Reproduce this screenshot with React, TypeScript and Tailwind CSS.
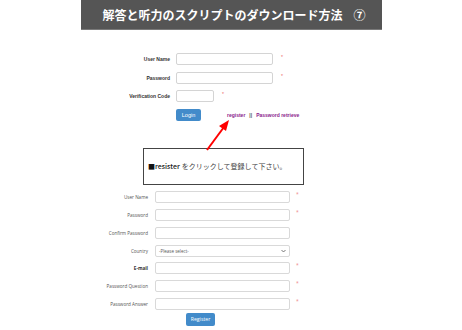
import React from "react";

const TopRow = ({ label, w, star = true }: { label: string; w: number; star?: boolean }) => (
  <div className="flex h-[12px]">
    <span className="w-[170px] text-right text-[5px] font-bold leading-[12px] text-[#333]">{label}</span>
    <div className="ml-[6px] h-[12px] rounded-[2px] border border-[#d4d4d4] bg-white" style={{ width: w }} />
    {star && <span className="ml-[8px] text-[5px] leading-[8px] text-[#e66]">*</span>}
  </div>
);

const BottomRow = ({ label, star = true, bold = false, mt = "mt-[6px]" }: { label: string; star?: boolean; bold?: boolean; mt?: string }) => (
  <div className={`flex h-[12px] ${mt}`}>
    <span className={`w-[148px] text-right text-[4.6px] leading-[12px] ${bold ? "font-bold text-[#333]" : "text-[#555]"}`}>{label}</span>
    <div className="ml-[7px] h-[12px] w-[135px] rounded-[2px] border border-[#d9d9d9] bg-white" />
    {star && <span className="ml-[6px] text-[5px] leading-[6px] text-[#e88]">*</span>}
  </div>
);

export default function App() {
  return (
    <div className="relative h-[330px] w-[462px] overflow-hidden bg-white" style={{ fontFamily: '"Liberation Sans", Arial, sans-serif' }}>
      <div
        className="mx-auto flex h-[30px] w-[301px] items-center border-b border-[#7a7a7a] bg-[#555555] pl-[22px] text-[12px] font-bold text-white"
        style={{ fontFamily: '"Noto Sans CJK JP", "Noto Sans", sans-serif' }}
      >
        <span>解答と听力のスクリプトのダウンロード方法</span>
        <span className="ml-[11px]">⑦</span>
      </div>

      <div className="mt-[23px] flex flex-col">
        <TopRow label="User Name" w={97} />
        <div className="mt-[7px]">
          <TopRow label="Password" w={97} />
        </div>
        <div className="mt-[6px]">
          <TopRow label="Verification Code" w={38} />
        </div>
        <div className="mt-[7px] flex h-[12px] items-center pl-[176px]">
          <div className="flex h-[12px] w-[25px] items-center justify-center rounded-[2px] bg-[#428bca] text-[5.5px] text-white">Login</div>
          <div className="ml-[26px] mt-[2px] flex items-center text-[5px] font-bold text-[#8b1a8b]">
            <span>register</span>
            <span className="mx-[4px] text-[#555]">||</span>
            <span>Password retrieve</span>
          </div>
        </div>
      </div>

      <div
        className="ml-[143px] mt-[27px] flex h-[37px] w-[161px] items-center border border-[#444] pl-[4px] text-[7px] text-[#444]"
        style={{ fontFamily: '"Noto Sans CJK JP", "Noto Sans", sans-serif' }}
      >
        <span className="text-[#111]">■</span>
        <span className="font-medium text-[#222]">resister</span>
        <span className="ml-[2px]">をクリックして登録して下さい。</span>
      </div>

      <div className="mt-[6px] flex flex-col" style={{ fontFamily: '"Open Sans", "Liberation Sans", sans-serif' }}>
        <BottomRow label="User Name" mt="mt-0" />
        <BottomRow label="Password" />
        <BottomRow label="Confirm Password" star={false} />
        <div className="mt-[6px] flex h-[12px]">
          <span className="w-[148px] text-right text-[4.6px] leading-[12px] text-[#555]">Country</span>
          <div className="ml-[7px] flex h-[12px] w-[135px] items-center justify-between rounded-[2px] border border-[#d9d9d9] bg-white px-[3px] text-[4.5px] text-[#555]">
            <span>-Please select-</span>
            <svg width="5" height="4" viewBox="0 0 10 6">
              <path d="M1 1l4 4 4-4" fill="none" stroke="#555" strokeWidth="1.6" />
            </svg>
          </div>
        </div>
        <BottomRow label="E-mail" bold mt="mt-[5px]" />
        <BottomRow label="Password Question" />
        <BottomRow label="Password Answer" />
        <div className="ml-[186px] mt-[3px] flex h-[13px] w-[29px] items-center justify-center rounded-[2px] bg-[#428bca] text-[5.2px] text-white">
          Register
        </div>
      </div>

      <svg className="absolute left-0 top-0" width="462" height="330" style={{ pointerEvents: "none" }}>
        <line x1="207" y1="150" x2="224" y2="127" stroke="#ff0000" strokeWidth="2" />
        <polygon points="229,120 219,126 226,131" fill="#ff0000" />
      </svg>
    </div>
  );
}
